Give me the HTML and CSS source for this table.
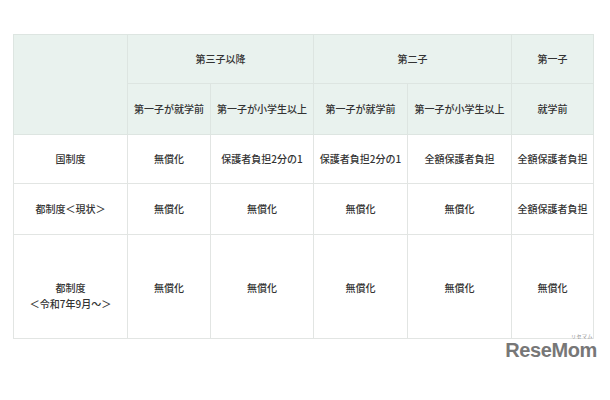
FILE: index.html
```html
<!DOCTYPE html>
<html lang="ja">
<head>
<meta charset="utf-8">
<link rel="stylesheet" href="styles.css">
</head>
<body>
<div class="page">
  <table class="grid">
    <colgroup>
      <col class="c1"><col class="c2"><col class="c3"><col class="c4"><col class="c5"><col class="c6">
    </colgroup>
    <thead>
      <tr class="h1">
        <th rowspan="2"></th>
        <th colspan="2">第三子以降</th>
        <th colspan="2">第二子</th>
        <th>第一子</th>
      </tr>
      <tr class="h2">
        <th>第一子が就学前</th>
        <th>第一子が小学生以上</th>
        <th>第一子が就学前</th>
        <th>第一子が小学生以上</th>
        <th>就学前</th>
      </tr>
    </thead>
    <tbody>
      <tr class="r1">
        <td>国制度</td>
        <td>無償化</td>
        <td>保護者負担2分の1</td>
        <td>保護者負担2分の1</td>
        <td>全額保護者負担</td>
        <td>全額保護者負担</td>
      </tr>
      <tr class="r2">
        <td>都制度＜現状＞</td>
        <td>無償化</td>
        <td>無償化</td>
        <td>無償化</td>
        <td>無償化</td>
        <td>全額保護者負担</td>
      </tr>
      <tr class="r3">
        <td>都制度<br>＜令和7年9月～＞</td>
        <td>無償化</td>
        <td>無償化</td>
        <td>無償化</td>
        <td>無償化</td>
        <td>無償化</td>
      </tr>
    </tbody>
  </table>
  <div class="footer">
    <div class="logo"><span class="kana">リセマム</span><span class="word">ReseMom</span></div>
  </div>
</div>
</body>
</html>
```
FILE: styles.css
```css
html, body {
  margin: 0;
  padding: 0;
  background: #ffffff;
}
body {
  font-family: "Noto Sans CJK JP", "Noto Sans", sans-serif;
  color: #333333;
}
.page {
  width: 610px;
  height: 400px;
  padding: 34px 0 0 13px;
  box-sizing: border-box;
}
.grid {
  border-collapse: collapse;
  table-layout: fixed;
  width: 581px;
  font-size: 10px;
  line-height: 16px;
}
.c1 { width: 114px; }
.c2 { width: 83px; }
.c3 { width: 103px; }
.c4 { width: 94px; }
.c5 { width: 104px; }
.c6 { width: 82px; }
.grid th, .grid td {
  border: 1px solid #e2e5e3;
  text-align: center;
  vertical-align: middle;
  padding: 0;
  font-weight: 500;
  white-space: nowrap;
}
.grid th {
  background: #e9f2ee;
  border-color: #dde5e1;
}
.h1 { height: 49px; }
.h2 { height: 51px; }
.r1 { height: 49px; }
.r2 { height: 51px; }
.r3 { height: 104px; }
.r3 td {
  vertical-align: top;
  padding-top: 45px;
}
.footer {
  width: 584px;
  display: flex;
  justify-content: flex-end;
  margin-top: -6px;
}
.logo {
  display: flex;
  flex-direction: column;
  align-items: flex-end;
  font-family: "Liberation Sans", Arial, sans-serif;
  font-weight: 700;
  color: #777777;
}
.kana {
  font-family: "Noto Sans CJK JP", sans-serif;
  font-size: 5px;
  line-height: 6px;
  letter-spacing: 0.5px;
  font-weight: 400;
  color: #888888;
  margin-right: 4px;
}
.word {
  font-size: 20px;
  line-height: 23px;
  letter-spacing: -0.4px;
}
```
